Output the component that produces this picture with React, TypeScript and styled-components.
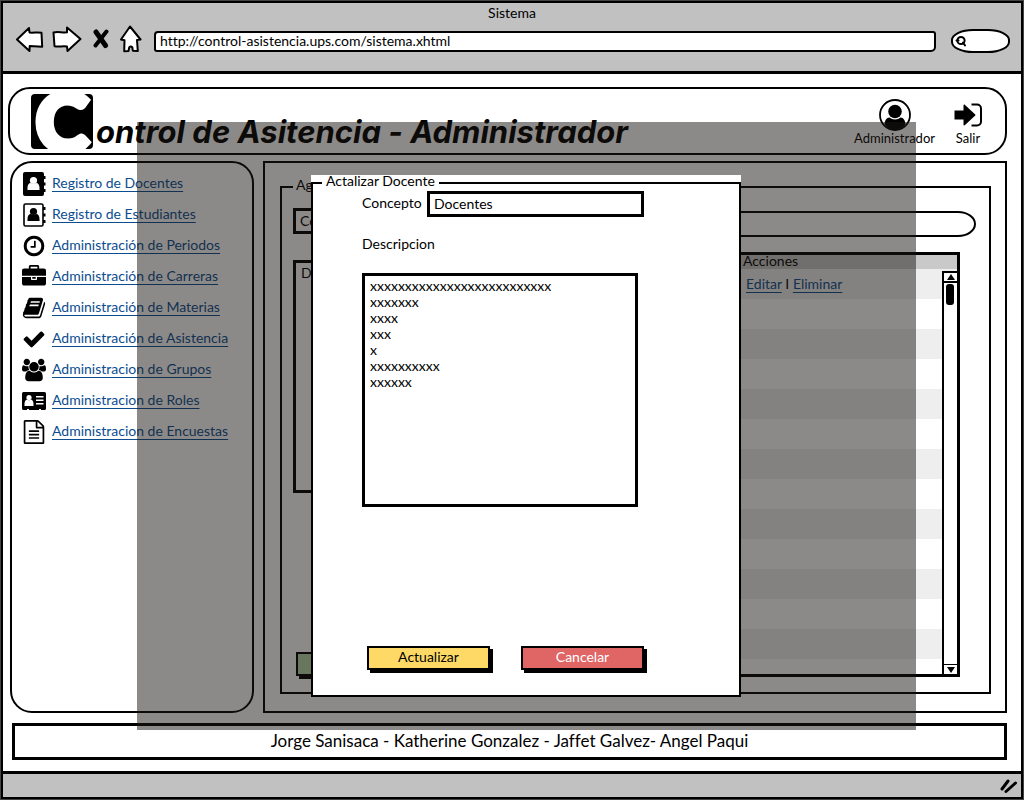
import React from "react";
import styled, { createGlobalStyle } from "styled-components";

const GlobalStyle = createGlobalStyle`
  *, *::before, *::after { box-sizing: border-box; }
  html, body { margin: 0; background: #fff; }
  body, input, textarea, button {
    font-family: Lato, "Liberation Sans", sans-serif;
    font-size: 14px;
    line-height: 16px;
    font-variant-ligatures: none;
    color: #000;
  }
`;

const ink = "#000";
const chrome = "#c1c1c1";
const linkBlue = "#0b4d8f";

/* Browser window */
const Window = styled.div`
  position: relative;
  display: flex;
  flex-direction: column;
  min-height: calc(100vh - 2px);
  margin: 1px;
  border: 2px solid ${ink};
  outline: 1px solid #444;
`;

const Chrome = styled.header`
  height: 71px;
  background: ${chrome};
  border-bottom: 3px solid ${ink};
`;

const WindowTitle = styled.div`
  padding-top: 2px;
  height: 18px;
  text-align: center;
`;

const Toolbar = styled.div`
  display: flex;
  align-items: center;
  height: 40px;
  padding: 0 11px 0 12px;
`;

const NavButtons = styled.div`
  display: flex;
  align-items: center;
  gap: 7px;
  width: 139px;
  height: 30px;
  padding-bottom: 4px;
`;

const NavButton = styled.button`
  display: flex;
  padding: 0;
  border: 0;
  background: none;
`;

const UrlInput = styled.input`
  flex: 1;
  min-width: 0;
  height: 21px;
  padding: 0 4px 2px;
  border: 2px solid ${ink};
  border-radius: 4px 3px 5px 3px;
  background: #fff;
`;

const SearchBox = styled.label`
  display: flex;
  align-items: center;
  width: 59px;
  height: 24px;
  margin-left: 15px;
  padding-left: 2px;
  border: 2px solid ${ink};
  border-radius: 22px / 11px;
  background: #fff;
`;

const SearchInput = styled.input`
  width: 36px;
  height: 16px;
  padding: 0;
  border: 0;
  background: none;
`;

/* Page */
const Page = styled.div`
  flex: 1;
  display: flex;
  flex-direction: column;
  padding: 13px 14px 11px 5px;
`;

const Banner = styled.header`
  display: flex;
  justify-content: space-between;
  height: 68px;
  padding: 0 23px 0 21px;
  border: 2px solid ${ink};
  border-radius: 22px;
`;

const Brand = styled.h1`
  display: flex;
  align-items: flex-start;
  margin: 0;
  font-family: Inter, Lato, sans-serif;
  font-size: 31px;
  font-weight: 700;
  font-style: italic;
`;

const BrandMark = styled.span`
  width: 62px;
  height: 55px;
  margin-top: 5px;
  overflow: hidden;
  border-radius: 4px;
  background: #000;
  color: #fff;
  font-family: Lato, sans-serif;
  font-size: 80px;
  font-weight: 900;
  font-style: normal;
  line-height: 52px;
  text-align: center;
  -webkit-text-stroke: 6px #fff;
`;

const BrandText = styled.span`
  padding: 27px 0 0 3px;
  line-height: 32px;
`;

const UserMenu = styled.nav`
  display: flex;
  gap: 19px;
  padding-top: 10px;
`;

const UserLink = styled.a`
  display: flex;
  flex-direction: column;
  align-items: center;
  color: ${ink};
  font-size: 13px;
  line-height: 14px;
  text-decoration: none;
`;

const UserIcon = styled.span`
  display: flex;
  align-items: center;
  height: 32px;
`;

const Columns = styled.div`
  flex: 1;
  display: flex;
  gap: 9px;
  margin: 6px 0 0 2px;
`;

const Sidebar = styled.nav`
  width: 244px;
  padding: 5px 10px;
  border: 2px solid ${ink};
  border-radius: 22px;
`;

const MenuList = styled.ul`
  margin: 0;
  padding: 0;
  list-style: none;
`;

const MenuItem = styled.li`
  display: flex;
  align-items: center;
  gap: 6px;
  height: 31px;

  a { padding-bottom: 2px; }
`;

const TextLink = styled.a`
  color: ${linkBlue};
  text-decoration: underline;
  text-decoration-thickness: 1px;
  text-underline-offset: 3px;
`;

const Main = styled.main`
  flex: 1;
  display: flex;
  min-width: 0;
  padding: 16px 14px 17px 15px;
  border: 2px solid ${ink};
`;

const Group = styled.fieldset`
  flex: 1;
  min-width: 0;
  margin: 0;
  padding: 0 1px 15px 11px;
  border: 2px solid ${ink};
`;

const Legend = styled.legend`
  height: 16px;
  padding: 0 3px;
  line-height: 12px;
`;

const GroupColumns = styled.div`
  display: flex;
  gap: 20px;
  height: 100%;
  padding-top: 13px;
`;

const FormColumn = styled.form`
  display: flex;
  flex-direction: column;
  width: 240px;
`;

const Input = styled.input`
  height: 26px;
  padding: 0 4px 2px;
  border: 3px solid ${ink};
  background: #fff;
`;

const TextArea = styled.textarea<{ $height: number }>`
  display: block;
  height: ${(p) => p.$height}px;
  padding: 2px 5px;
  border: 3px solid ${ink};
  background: #fff;
  resize: none;
`;

const FormTextArea = styled(TextArea)`
  margin-top: 26px;
`;

const Button = styled.button<{ $fill: string; $color?: string }>`
  width: 123px;
  height: 24px;
  padding: 0 0 2px;
  border: 2px solid ${ink};
  background: ${(p) => p.$fill};
  box-shadow: 3px 3px 0 ${ink};
  color: ${(p) => p.$color ?? ink};
`;

const SaveButton = styled(Button)`
  margin: auto 0 1px 3px;
`;

const ListColumn = styled.section`
  flex: 1;
  display: flex;
  flex-direction: column;
  min-width: 0;
  padding-top: 3px;
`;

const Filter = styled.input`
  height: 26px;
  margin-right: 12px;
  padding: 0 12px;
  border: 2px solid ${ink};
  border-radius: 18px / 13px;
  background: #fff;
`;

const TablePanel = styled.div`
  position: relative;
  flex: 1;
  margin: 15px 28px 0 0;
  border: 3px solid ${ink};
`;

const Table = styled.table`
  width: 100%;
  table-layout: fixed;
  border-collapse: collapse;

  th, td { padding: 0 2px; text-align: left; font-weight: 400; }
  th { height: 14px; line-height: 12px; padding-bottom: 2px; background: #c9c9c9; }
  th:last-child { width: 216px; }
  td { height: 30px; }
  td:last-child { padding-left: 5px; }
  tbody tr:nth-child(odd) { background: #eee; }
`;

const Scrollbar = styled.div`
  position: absolute;
  top: 16px;
  right: 0;
  bottom: 0;
  display: flex;
  flex-direction: column;
  width: 15px;
  border: solid ${ink};
  border-width: 2px 0 0 2px;
  background: #fff;
`;

const ScrollButton = styled.button<{ $last?: boolean }>`
  display: flex;
  justify-content: center;
  align-items: center;
  height: 10px;
  padding: 0;
  border: solid ${ink};
  border-width: ${(p) => (p.$last ? "1px 0 0" : "0 0 2px")};
  background: #fff;
`;

const Thumb = styled.div`
  width: 8px;
  height: 21px;
  margin: 1px auto auto 2px;
  border-radius: 3px;
  background: ${ink};
`;

const Footer = styled.footer`
  display: flex;
  justify-content: center;
  height: 37px;
  margin: 10px 0 0 4px;
  padding-top: 5px;
  border: 3px solid ${ink};
  font-size: 17px;
  line-height: 20px;
`;

const StatusBar = styled.div`
  display: flex;
  justify-content: flex-end;
  align-items: center;
  height: 26px;
  padding-right: 3px;
  border-top: 3px solid ${ink};
  background: ${chrome};
`;

/* Modal */
const Overlay = styled.div`
  position: absolute;
  top: 119px;
  right: 105px;
  bottom: 67px;
  left: 134px;
  padding: 53px 0 0 174px;
  background: rgba(26, 22, 18, 0.5);
`;

const Dialog = styled.div`
  display: flex;
  width: 430px;
  height: 522px;
  background: #fff;
`;

const DialogGroup = styled.fieldset`
  flex: 1;
  margin: 0;
  padding: 0 0 0 9px;
  border: 2px solid ${ink};
`;

const DialogLegend = styled.legend`
  height: 16px;
  padding: 0 4px;
  line-height: 12px;
`;

const DialogForm = styled.form`
  display: flex;
  flex-direction: column;
  height: 100%;
  padding: 0 0 25px 40px;
`;

const FieldRow = styled.div`
  display: flex;
  align-items: center;

  label { width: 65px; padding-bottom: 2px; }
  input { width: 217px; }
`;

const FieldLabel = styled.label`
  margin: 19px 0 21px;
`;

const DialogTextArea = styled(TextArea)`
  width: 276px;
`;

const Actions = styled.div`
  display: flex;
  gap: 31px;
  margin: auto 0 0 5px;
`;

/* Icons */
const faPaths = {
  clock:
    "M1024 544v448q0 14-9 23t-23 9h-320q-14 0-23-9t-9-23v-64q0-14 9-23t23-9h224v-352q0-14 9-23t23-9h64q14 0 23 9t9 23zm416 352q0-148-73-273t-198-198-273-73-273 73-198 198-73 273 73 273 198 198 273 73 273-73 198-198 73-273zm224 0q0 209-103 385.500t-279.500 279.500-385.500 103-385.500-103-279.500-279.500-103-385.500 103-385.500 279.500-279.500 385.500-103 385.500 103 279.500 279.500 103 385.500z",
  briefcase:
    "M640 256h512v-128h-512v128zm1152 640v480q0 66-47 113t-113 47h-1472q-66 0-113-47t-47-113v-480h672v160q0 26 19 45t45 19h320q26 0 45-19t19-45v-160h672zm-768 0v128h-256v-128h256zm768-480v384h-1792v-384q0-66 47-113t113-47h352v-160q0-40 28-68t68-28h576q40 0 68 28t28 68v160h352q66 0 113 47t47 113z",
  book:
    "M1703 478q40 57 18 129l-275 906q-19 64-76.500 107.500t-122.500 43.500h-923q-77 0-148.500-53.500t-99.500-131.500q-24-67-2-127 0-4 3-27t4-37q1-8-3-21.500t-3-19.500q2-11 8-21t16.500-23.500 16.500-23.500q23-38 45-91.500t30-91.500q3-10 .5-30t-.5-28q3-11 17-28t17-23q21-36 42-92t25-90q1-9-2.500-32t.5-28q4-13 22-30.500t22-22.500q19-26 42.500-84.500t27.500-96.500q1-8-3-25.500t-2-26.500q2-8 9-18t18-23 17-21q8-12 16.500-30.500t15-35 16-36 19.500-32 26.500-23.500 36-11.500 47.500 5.500l-1 3q38-9 51-9h761q74 0 114 56t18 130l-274 906q-36 119-71.500 153.500t-128.500 34.500h-869q-27 0-38 15-11 16-1 43 24 70 144 70h923q29 0 56-15.500t35-41.500l300-987q7-22 5-57 38 15 59 43zm-1064 2q-4 13 2 22.500t20 9.500h608q13 0 25.500-9.500t16.500-22.500l21-64q4-13-2-22.500t-20-9.500h-608q-13 0-25.500 9.500t-16.500 22.500zm-83 256q-4 13 2 22.500t20 9.500h608q13 0 25.500-9.500t16.500-22.500l21-64q4-13-2-22.500t-20-9.500h-608q-13 0-25.500 9.500t-16.500 22.500z",
  check:
    "M1671 566q0 40-28 68l-724 724-136 136q-28 28-68 28t-68-28l-136-136-362-362q-28-28-28-68t28-68l136-136q28-28 68-28t68 28l294 295 656-657q28-28 68-28t68 28l136 136q28 28 28 68z",
  users:
    "M529 896q-162 5-265 128h-134q-82 0-138-40.500t-56-118.500q0-353 124-353 6 0 43.500 21t97.500 42.500 119 21.500q67 0 133-23-5 37-5 66 0 139 81 256zm1071 637q0 120-73 189.500t-194 69.500h-874q-121 0-194-69.500t-73-189.500q0-53 3.500-103.500t14-109 26.500-108.500 43-97.500 62-81 85.500-53.500 111.500-20q10 0 43 21.500t73 48 107 48 135 21.500 135-21.500 107-48 73-48 43-21.500q61 0 111.500 20t85.500 53.500 62 81 43 97.500 26.500 108.500 14 109 3.500 103.500zm-1024-1277q0 106-75 181t-181 75-181-75-75-181 75-181 181-75 181 75 75 181zm704 384q0 159-112.500 271.500t-271.500 112.500-271.500-112.500-112.500-271.500 112.500-271.500 271.500-112.500 271.500 112.500 112.500 271.500zm576 225q0 78-56 118.500t-138 40.500h-134q-103-123-265-128 81-117 81-256 0-29-5-66 66 23 133 23 59 0 119-21.500t97.500-42.500 43.500-21q124 0 124 353zm-128-609q0 106-75 181t-181 75-181-75-75-181 75-181 181-75 181 75 75 181z",
  file:
    "M1596 380q28 28 48 76t20 88v1152q0 40-28 68t-68 28h-1344q-40 0-68-28t-28-68v-1600q0-40 28-68t68-28h896q40 0 88 20t76 48zm-444-244v376h376q-10-29-22-41l-313-313q-12-12-41-22zm384 1528v-1024h-416q-40 0-68-28t-28-68v-416h-768v1536h1280zm-1024-864q0-14 9-23t23-9h704q14 0 23 9t9 23v64q0 14-9 23t-23 9h-704q-14 0-23-9t-9-23v-64zm736 224q14 0 23 9t9 23v64q0 14-9 23t-23 9h-704q-14 0-23-9t-9-23v-64q0-14 9-23t23-9h704zm0 256q14 0 23 9t9 23v64q0 14-9 23t-23 9h-704q-14 0-23-9t-9-23v-64q0-14 9-23t23-9h704z",
};

const FaIcon = ({ name, box = "0 0 1792 1792" }: { name: keyof typeof faPaths; box?: string }) => (
  <svg width="24" height="24" viewBox={box} aria-hidden="true">
    <path d={faPaths[name]} />
  </svg>
);

const AddressBook = ({ outline }: { outline?: boolean }) => (
  <svg width="24" height="24" viewBox="0 0 24 24" aria-hidden="true">
    {outline ? (
      <rect x="2" y="1" width="19" height="22" rx="1.500" fill="#fff" stroke="#000" strokeWidth="1.600" />
    ) : (
      <rect x="1" y="0" width="21" height="24" rx="2" />
    )}
    <path d="M21 4h2.500v3H21zM21 10.500h2.500v3H21zM21 17h2.500v3H21z" />
    <g fill={outline ? "#000" : "#fff"}>
      <circle cx="11.500" cy="8.500" r="3.600" />
      <path d="M5.500 18v-2c0-3 1-5 3.500-5 1 1 4 1 5 0 2.500 0 3.500 2 3.500 5v2z" />
    </g>
  </svg>
);

const IdCard = () => (
  <svg width="24" height="24" viewBox="0 0 24 24" aria-hidden="true">
    <path d="M1.500 3h21A1.500 1.500 0 0 1 24 4.500v15a1.500 1.500 0 0 1-1.500 1.500H19v-1h-2v1H7v-1H5v1H1.500A1.500 1.500 0 0 1 0 19.500v-15A1.500 1.500 0 0 1 1.500 3z" />
    <g fill="#fff">
      <circle cx="7" cy="8.500" r="2.600" />
      <path d="M2.500 17v-2c0-2.500 1-4 2.500-4.500 1 1 3 1 4 0 1.500.5 2.500 2 2.500 4.500v2zM14 7h7.500v1.500H14zM14 10.500h7.500V12H14zM14 14h7.500v1.500H14z" />
    </g>
  </svg>
);

const menu: { label: string; icon: React.ReactNode }[] = [
  { label: "Registro de Docentes", icon: <AddressBook /> },
  { label: "Registro de Estudiantes", icon: <AddressBook outline /> },
  { label: "Administración de Periodos", icon: <FaIcon name="clock" /> },
  { label: "Administración de Carreras", icon: <FaIcon name="briefcase" /> },
  { label: "Administración de Materias", icon: <FaIcon name="book" /> },
  { label: "Administración de Asistencia", icon: <FaIcon name="check" /> },
  { label: "Administracion de Grupos", icon: <FaIcon name="users" box="-64 0 1920 1792" /> },
  { label: "Administracion de Roles", icon: <IdCard /> },
  { label: "Administracion de Encuestas", icon: <FaIcon name="file" /> },
];

const description = [26, 7, 4, 3, 1, 10, 6].map((n) => "x".repeat(n)).join("\n");

const emptyRows = Array.from({ length: 12 }, (_, i) => i);

export default function App() {
  return (
    <>
      <GlobalStyle />
      <Window>
        <Chrome>
          <WindowTitle>Sistema</WindowTitle>
          <Toolbar>
            <NavButtons>
              <NavButton aria-label="Atrás">
                <svg width="30" height="28" viewBox="0 0 30 28" fill="#fff" stroke="#000" strokeWidth="2" strokeLinejoin="round">
                  <path d="M2 14.500L14 3l.5 4.500c4 .6 8-.6 12 .3l.7 14-12.500-.8-.2 5z" />
                </svg>
              </NavButton>
              <NavButton aria-label="Adelante">
                <svg width="30" height="28" viewBox="0 0 30 28" fill="#fff" stroke="#000" strokeWidth="2" strokeLinejoin="round">
                  <path d="M1.500 7.500c4-1.200 9 .4 13.500-.2V2.500L28.500 14 15.500 26l-.5-4.500c-4-.7-8 .5-12.500-.3z" />
                </svg>
              </NavButton>
              <NavButton aria-label="Detener">
                <svg width="24" height="20" viewBox="0 0 24 20" stroke="#000" strokeLinecap="round" fill="none">
                  <path d="M7 3l9.500 13.500" strokeWidth="5" />
                  <path d="M17.500 2.500L6.500 16.500" strokeWidth="4" />
                </svg>
              </NavButton>
              <NavButton aria-label="Inicio">
                <svg width="22" height="28" viewBox="0 0 22 28" fill="#fff" stroke="#000" strokeWidth="2" strokeLinejoin="round">
                  <path d="M10 1.500L20.500 14.500l-3.500.5.800 11-5-.3-.5-3.500c-1-.9-2-.9-3 0L8.500 26l-4.300.3.300-11-3.500-.8z" />
                </svg>
              </NavButton>
            </NavButtons>
            <UrlInput aria-label="Dirección" defaultValue="http://control-asistencia.ups.com/sistema.xhtml" />
            <SearchBox>
              <svg width="14" height="14" viewBox="0 0 14 14" fill="none" stroke="#000" strokeWidth="2" strokeLinecap="round" aria-hidden="true">
                <circle cx="6" cy="6.500" r="3.600" />
                <path d="M8 8.500l2 3M1.500 6.500h2" />
              </svg>
              <SearchInput aria-label="Buscar" />
            </SearchBox>
          </Toolbar>
        </Chrome>

        <Page>
          <Banner>
            <Brand>
              <BrandMark>C</BrandMark>
              <BrandText>ontrol de Asitencia - Administrador</BrandText>
            </Brand>
            <UserMenu>
              <UserLink href="#perfil">
                <UserIcon>
                  <svg width="32" height="32" viewBox="0 0 32 32" aria-hidden="true">
                    <circle cx="16" cy="16" r="15" fill="#fff" stroke="#000" strokeWidth="1.800" />
                    <circle cx="16" cy="12.500" r="6.800" />
                    <path d="M5.500 25.500c.3-4 2-7 5-7 3 2.500 8 2.500 11 0 3 0 4.700 3 5 7A14 14 0 0 1 16 30.500a14 14 0 0 1-10.500-5z" />
                  </svg>
                </UserIcon>
                Administrador
              </UserLink>
              <UserLink href="#salir">
                <UserIcon>
                  <svg width="28" height="24" viewBox="0 0 28 24" aria-hidden="true">
                    <path d="M.5 7.500h9V2.500c0-1 .8-1.300 1.500-.6l10 9.300c.6.5.6 1.100 0 1.600l-10 9.300c-.7.700-1.500.4-1.500-.6V16.500h-9z" />
                    <path d="M17.500 1.500h5.500a4 4 0 0 1 4 4v13a4 4 0 0 1-4 4h-5.500" fill="none" stroke="#000" strokeWidth="2" />
                  </svg>
                </UserIcon>
                Salir
              </UserLink>
            </UserMenu>
          </Banner>

          <Columns>
            <Sidebar>
              <MenuList>
                {menu.map((item) => (
                  <MenuItem key={item.label}>
                    {item.icon}
                    <TextLink href="#menu">{item.label}</TextLink>
                  </MenuItem>
                ))}
              </MenuList>
            </Sidebar>

            <Main>
              <Group>
                <Legend>Ag</Legend>
                <GroupColumns>
                  <FormColumn>
                    <Input aria-label="Concepto" defaultValue="Concepto" />
                    <FormTextArea $height={233} aria-label="Descripcion" defaultValue="Descripcion" />
                    <SaveButton type="button" $fill="#b6d7a8" aria-label="Agregar" />
                  </FormColumn>
                  <ListColumn>
                    <Filter aria-label="Filtrar" />
                    <TablePanel>
                      <Table>
                        <thead>
                          <tr>
                            <th />
                            <th>Acciones</th>
                          </tr>
                        </thead>
                        <tbody>
                          <tr>
                            <td />
                            <td>
                              <TextLink href="#editar">Editar</TextLink> I <TextLink href="#eliminar">Eliminar</TextLink>
                            </td>
                          </tr>
                          {emptyRows.map((i) => (
                            <tr key={i}>
                              <td />
                              <td />
                            </tr>
                          ))}
                        </tbody>
                      </Table>
                      <Scrollbar>
                        <ScrollButton aria-label="Subir">
                          <svg width="8" height="6" viewBox="0 0 8 6"><path d="M4 0l4 6H0z" /></svg>
                        </ScrollButton>
                        <Thumb />
                        <ScrollButton $last aria-label="Bajar">
                          <svg width="8" height="6" viewBox="0 0 8 6"><path d="M0 0h8L4 6z" /></svg>
                        </ScrollButton>
                      </Scrollbar>
                    </TablePanel>
                  </ListColumn>
                </GroupColumns>
              </Group>
            </Main>
          </Columns>

          <Footer>Jorge Sanisaca - Katherine Gonzalez - Jaffet Galvez- Angel Paqui</Footer>
        </Page>

        <StatusBar>
          <svg width="18" height="16" viewBox="0 0 18 16" fill="none" stroke="#000" strokeWidth="3" strokeLinecap="round" aria-hidden="true">
            <path d="M2 11L8 3M6 13.500L15.500 5" />
          </svg>
        </StatusBar>

        <Overlay>
          <Dialog role="dialog" aria-label="Actalizar Docente">
            <DialogGroup>
              <DialogLegend>Actalizar Docente</DialogLegend>
              <DialogForm>
                <FieldRow>
                  <label htmlFor="concepto">Concepto</label>
                  <Input id="concepto" defaultValue="Docentes" />
                </FieldRow>
                <FieldLabel htmlFor="descripcion">Descripcion</FieldLabel>
                <DialogTextArea id="descripcion" $height={234} defaultValue={description} />
                <Actions>
                  <Button type="button" $fill="#ffd966">Actualizar</Button>
                  <Button type="button" $fill="#e06666" $color="#fff">Cancelar</Button>
                </Actions>
              </DialogForm>
            </DialogGroup>
          </Dialog>
        </Overlay>
      </Window>
    </>
  );
}
